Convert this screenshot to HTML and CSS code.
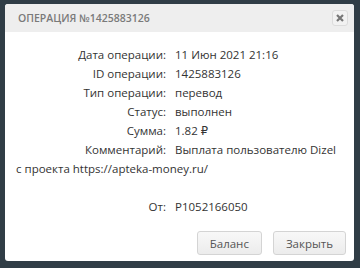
FILE: index.html
```html
<!DOCTYPE html>
<html>
<head>
<meta charset="utf-8">
<link rel="stylesheet" href="styles.css">
</head>
<body>
<div class="modal">
  <div class="head">
    <div class="title">Операция №1425883126</div>
    <button class="close" aria-label="close"><svg width="8" height="8" viewBox="0 0 8 8"><path d="M1 1L7 7M7 1L1 7" stroke="#777" stroke-width="2.2"/></svg></button>
  </div>
  <div class="body">
    <div class="row"><span class="lbl">Дата операции:</span>11 Июн 2021 21:16</div>
    <div class="row"><span class="lbl">ID операции:</span>1425883126</div>
    <div class="row"><span class="lbl">Тип операции:</span>перевод</div>
    <div class="row"><span class="lbl">Статус:</span>выполнен</div>
    <div class="row"><span class="lbl">Сумма:</span>1.82 ₽</div>
    <div class="row"><span class="lbl">Комментарий:</span>Выплата пользователю Dizel с проекта https://apteka-money.ru/</div>
    <div class="row gap"><span class="lbl">От:</span>P1052166050</div>
  </div>
  <div class="foot">
    <button class="btn">Баланс</button>
    <button class="btn">Закрыть</button>
  </div>
</div>
</body>
</html>
```
FILE: styles.css
```css
html, body { margin: 0; padding: 0; }
body {
  width: 360px; height: 268px;
  background: #303d46;
  font-family: "Open Sans", "DejaVu Sans", sans-serif;
  padding: 4px 0 0 5px;
  box-sizing: border-box;
}
.modal {
  width: 349px; height: 257px;
  background: #fff;
  border-radius: 3px;
  overflow: hidden;
  display: flex; flex-direction: column;
}
.head {
  height: 28px;
  background: #eeeeee;
  display: flex; align-items: center; justify-content: space-between;
  padding: 0 6px 0 13px;
}
.title {
  text-transform: uppercase;
  color: #7a7a7a;
  font-size: 10.5px;
  font-weight: 600;
  letter-spacing: 0;
}
.close {
  width: 16px; height: 16px; padding: 0;
  border: 1px solid #dcdcdc; border-radius: 3px;
  background: #f2f2f2;
  display: flex; align-items: center; justify-content: center;
}
.body {
  padding: 13px 16px 0 11px;
  font-size: 11.5px;
  color: #333;
  line-height: 19px;
  flex: 1;
}
.lbl {
  display: inline-block;
  width: 150px;
  text-align: right;
  margin-right: 9px;
}
.gap { margin-top: 19px; }
.foot {
  display: flex; justify-content: flex-end; gap: 11px;
  padding: 0 8px 6px 0;
}
.btn {
  height: 24px;
  padding: 0 12px;
  font-family: inherit; font-size: 11.5px; color: #555;
  background: linear-gradient(#f8f8f8, #ececec);
  border: 1px solid #d4d4d4; border-radius: 3px;
}
```
